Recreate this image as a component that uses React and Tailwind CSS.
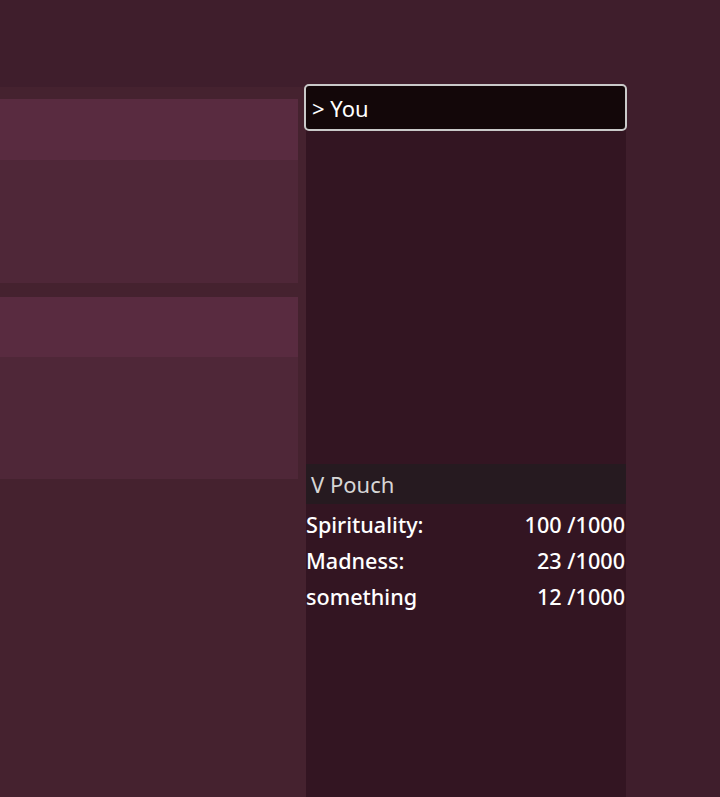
const stats = [
  { label: "Spirituality:", value: "100 /1000" },
  { label: "Madness:", value: "23 /1000" },
  { label: "something", value: "12 /1000" },
];

const Card = ({ head, body }) => {
  return (
    <div className="w-[298px]">
      <div className="bg-[#592b40]" style={{ height: head }}></div>
      <div className="bg-[#4f2738]" style={{ height: body }}></div>
    </div>
  );
};

const App = () => {
  return (
    <div
      className="flex h-screen min-h-[797px] flex-col overflow-hidden bg-[#3f1e2c]"
      style={{ fontFamily: '"Noto Sans", "Open Sans", sans-serif' }}
    >
      <div className="h-[87px] flex-none"></div>
      <div className="flex flex-1">
        <div className="flex w-[306px] flex-none flex-col gap-[14px] bg-[#45222f] pt-[12px]">
          <Card head={61} body={123} />
          <Card head={60} body={122} />
        </div>

        <div className="flex w-[320px] flex-none flex-col bg-[#331522]">
          <div className="-mt-[3px] -ml-[2px] flex h-[47px] w-[323px] items-center rounded-[5px] border-2 border-[#c9c9c9] bg-[#130709] pt-[1px] pl-[6px] text-[22px] text-white">
            &gt; You
          </div>

          <div className="mt-[333px] flex h-[40px] items-center bg-[#261a20] pl-[5px] text-[22px] text-[#d6d6d6]">
            V Pouch
          </div>

          <div className="flex flex-col pt-[3px]">
            {stats.map((s) => (
              <div
                key={s.label}
                className="flex h-[36px] items-center justify-between pr-[1px] text-[21.6px] font-medium text-white"
              >
                <span>{s.label}</span>
                <span>{s.value}</span>
              </div>
            ))}
          </div>
        </div>
      </div>
    </div>
  );
};

export default App;
